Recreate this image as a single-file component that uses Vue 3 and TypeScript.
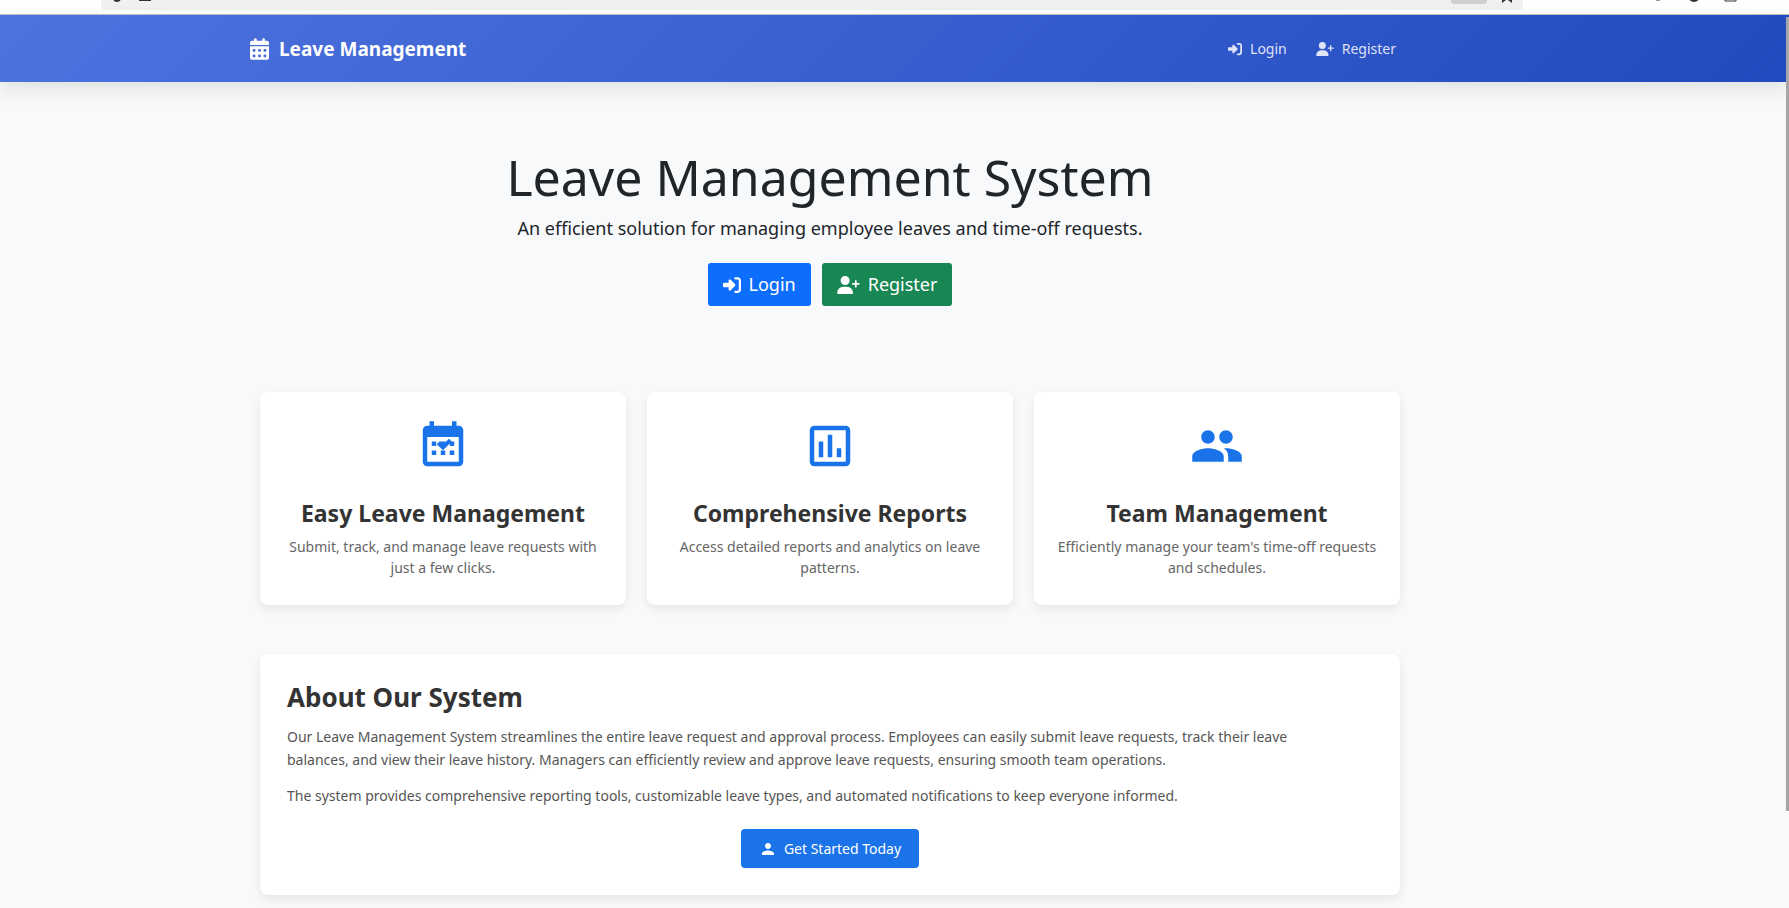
<script setup lang="ts">
interface Feature {
  title: string
  text: string
  icon: string
}

const loginIcon =
  'M217.9 105.9L340.7 228.7c7.2 7.2 11.3 17.1 11.3 27.3s-4.1 20.1-11.3 27.3L217.9 406.1c-6.4 6.4-15 9.9-24 9.9c-18.7 0-33.9-15.2-33.9-33.9V320H32c-17.7 0-32-14.3-32-32V224c0-17.7 14.3-32 32-32H160V129.9c0-18.7 15.2-33.9 33.9-33.9c9 0 17.6 3.6 24 9.9zM352 416h64c17.7 0 32-14.3 32-32V128c0-17.7-14.3-32-32-32H352c-17.7 0-32-14.3-32-32s14.3-32 32-32h64c53 0 96 43 96 96V384c0 53-43 96-96 96H352c-17.7 0-32-14.3-32-32s14.3-32 32-32z'
const registerIcon =
  'M96 128a128 128 0 1 1 256 0A128 128 0 1 1 96 128zM0 482.3C0 383.8 79.8 304 178.3 304h91.4C368.2 304 448 383.8 448 482.3c0 16.4-13.3 29.7-29.7 29.7H29.7C13.3 512 0 498.7 0 482.3zM504 312V248H440c-13.3 0-24-10.7-24-24s10.7-24 24-24h64V136c0-13.3 10.7-24 24-24s24 10.7 24 24v64h64c13.3 0 24 10.7 24 24s-10.7 24-24 24H552v64c0 13.3-10.7 24-24 24s-24-10.7-24-24z'
const calendarIcon =
  'M128 0c17.7 0 32 14.3 32 32V64H288V32c0-17.7 14.3-32 32-32s32 14.3 32 32V64h48c26.500 0 48 21.500 48 48v48H0V112C0 85.500 21.500 64 48 64H96V32c0-17.700 14.300-32 32-32zM0 192H448V464c0 26.500-21.500 48-48 48H48c-26.500 0-48-21.500-48-48V192zm64 80v32c0 8.800 7.200 16 16 16h32c8.800 0 16-7.200 16-16V272c0-8.800-7.200-16-16-16H80c-8.800 0-16 7.200-16 16zm128 0v32c0 8.800 7.200 16 16 16h32c8.800 0 16-7.200 16-16V272c0-8.800-7.200-16-16-16H208c-8.800 0-16 7.200-16 16zm144-16c-8.800 0-16 7.200-16 16v32c0 8.800 7.200 16 16 16h32c8.800 0 16-7.200 16-16V272c0-8.800-7.200-16-16-16H336zM64 400v32c0 8.800 7.200 16 16 16h32c8.800 0 16-7.200 16-16V400c0-8.800-7.200-16-16-16H80c-8.800 0-16 7.200-16 16zm144-16c-8.800 0-16 7.200-16 16v32c0 8.800 7.200 16 16 16h32c8.800 0 16-7.200 16-16V400c0-8.800-7.200-16-16-16H208zm112 16v32c0 8.800 7.200 16 16 16h32c8.800 0 16-7.200 16-16V400c0-8.800-7.200-16-16-16H336c-8.800 0-16 7.200-16 16z'

const features: Feature[] = [
  {
    title: 'Easy Leave Management',
    text: 'Submit, track, and manage leave requests with just a few clicks.',
    icon: 'M19 3h-1V1h-2v2H8V1H6v2H5c-1.110 0-2 .9-2 2v14c0 1.100.89 2 2 2h14c1.100 0 2-.9 2-2V5c0-1.100-.9-2-2-2zm0 16H5V8h14v11zM7 10h2v2H7zM15 10h2v2h-2zM7 14h2v2H7zM11 14h2v2h-2zM15 14h2v2h-2zM9.200 11.200L10.400 10L13.400 10L14.700 8.800L15.900 10L12 13.900z',
  },
  {
    title: 'Comprehensive Reports',
    text: 'Access detailed reports and analytics on leave patterns.',
    icon: 'M9 17H7v-7h2v7zm4 0h-2V7h2v10zm4 0h-2v-4h2v4zm2 2H5V5h14v14zm0-16H5c-1.100 0-2 .9-2 2v14c0 1.100.9 2 2 2h14c1.100 0 2-.9 2-2V5c0-1.100-.9-2-2-2z',
  },
  {
    title: 'Team Management',
    text: "Efficiently manage your team's time-off requests and schedules.",
    icon: 'M16 11c1.660 0 2.990-1.340 2.990-3S17.660 5 16 5c-1.660 0-3 1.340-3 3s1.340 3 3 3zm-8 0c1.660 0 2.990-1.340 2.990-3S9.660 5 8 5C6.340 5 5 6.340 5 8s1.340 3 3 3zm0 2c-2.330 0-7 1.170-7 3.500V19h14v-2.500c0-2.330-4.670-3.500-7-3.500zm8 0c-.29 0-.62.02-.97.05 1.160.84 1.970 1.970 1.970 3.450V19h6v-2.500c0-2.330-4.670-3.500-7-3.500z',
  },
]
</script>

<template>
  <div class="page">
    <div class="chrome">
      <div class="address">
        <svg class="glyph" viewBox="0 0 60 10"><circle cx="16" cy="-2" r="3" /><path d="M38 0h12" /></svg>
        <span class="badge"></span>
        <svg class="star" viewBox="0 0 14 10"><path d="M3-2v3l4-3 4 3v-3" /></svg>
      </div>
      <svg class="tools" viewBox="0 0 90 10"><path class="faint" d="M3 0h4" /><circle cx="41" cy="-4" r="5" /><path class="thin" d="M72-4v5h11v-5" /></svg>
    </div>
    <header class="navbar">
      <div class="navrow">
        <a class="brand" href="#">
          <svg viewBox="0 0 448 512"><path fill-rule="evenodd" :d="calendarIcon" /></svg>
          <span>Leave Management</span>
        </a>
        <nav>
          <a href="#login"><svg class="ic-login" viewBox="0 0 512 512"><path :d="loginIcon" /></svg><span>Login</span></a>
          <a href="#register"><svg class="ic-register" viewBox="0 0 640 512"><path :d="registerIcon" /></svg><span>Register</span></a>
        </nav>
      </div>
    </header>
    <div class="scrollthumb"></div>
    <main>
      <div class="content">
        <section class="hero">
          <h1>Leave Management System</h1>
          <p>An efficient solution for managing employee leaves and time-off requests.</p>
          <div class="actions">
            <a class="btn primary" href="#login"><svg class="ic-login" viewBox="0 0 512 512"><path :d="loginIcon" /></svg><span>Login</span></a>
            <a class="btn success" href="#register"><svg class="ic-register" viewBox="0 0 640 512"><path :d="registerIcon" /></svg><span>Register</span></a>
          </div>
        </section>
        <section class="features">
          <article v-for="f in features" :key="f.title" class="card">
            <svg viewBox="0 0 24 24"><path :d="f.icon" /></svg>
            <h3>{{ f.title }}</h3>
            <p>{{ f.text }}</p>
          </article>
        </section>
        <section class="card about">
          <h2>About Our System</h2>
          <p>Our Leave Management System streamlines the entire leave request and approval process. Employees can easily submit leave requests, track their leave balances, and view their leave history. Managers can efficiently review and approve leave requests, ensuring smooth team operations.</p>
          <p>The system provides comprehensive reporting tools, customizable leave types, and automated notifications to keep everyone informed.</p>
          <div class="start">
            <a href="#register">
              <svg viewBox="0 0 24 24"><path d="M12 12c2.210 0 4-1.790 4-4s-1.790-4-4-4-4 1.790-4 4 1.790 4 4 4zm0 2c-2.670 0-8 1.340-8 4v2h16v-2c0-2.660-5.330-4-8-4z" /></svg>
              <span>Get Started Today</span>
            </a>
          </div>
        </section>
      </div>
    </main>
  </div>
</template>

<style>
body {
  margin: 0;
  background: #f8f9fb;
}
</style>

<style scoped>
.page {
  position: relative;
  height: 100vh;
  overflow: hidden;
  font-family: "Noto Sans", sans-serif;
  color: #212529;
  background: #f8f9fb;
}
a {
  text-decoration: none;
  color: inherit;
}
svg {
  flex: none;
  fill: currentColor;
}
.chrome {
  display: flex;
  align-items: flex-start;
  height: 14px;
  padding-left: 101px;
  background: #fff;
  border-bottom: 1px solid #c3c3c3;
}
.address {
  flex: 1;
  display: flex;
  height: 10px;
  background: #f1f1f1;
  border-radius: 0 0 4px 4px;
}
.chrome svg {
  height: 10px;
  fill: none;
  stroke: #333;
  stroke-width: 2;
  overflow: hidden;
}
.chrome .glyph {
  width: 60px;
}
.badge {
  width: 36px;
  height: 4px;
  margin-left: auto;
  background: #cfcfcf;
  border-radius: 0 0 3px 3px;
}
.chrome .star {
  width: 14px;
  margin: 0 9px 0 13px;
}
.chrome .tools {
  width: 90px;
  margin: 0 46px 0 130px;
}
.chrome .faint {
  stroke: #999;
}
.chrome .thin {
  stroke-width: 1;
}
.navbar {
  position: relative;
  background: linear-gradient(135deg, #4e73df 0%, #224abe 100%);
  box-shadow: 0 7px 20px rgba(0, 0, 0, 0.1);
  color: #fff;
}
.navrow,
main {
  display: grid;
  grid-template-columns: 260fr 1140fr 389fr;
}
.navrow {
  grid-template-columns: 250fr 1146fr 393fr;
}
.navrow::before,
main::before {
  content: "";
}
.navrow {
  height: 67px;
}
.brand {
  grid-column: 2;
  grid-row: 1;
  justify-self: start;
  display: flex;
  align-items: center;
  gap: 10px;
  font-size: 19px;
  font-weight: 700;
}
.brand svg {
  width: 19px;
  height: 22px;
}
nav {
  grid-column: 2;
  grid-row: 1;
  justify-self: end;
  display: flex;
  gap: 29px;
  font-size: 14px;
  color: rgba(255, 255, 255, 0.85);
}
nav a {
  display: flex;
  align-items: center;
  gap: 8px;
}
nav .ic-login {
  width: 14px;
  height: 14px;
}
nav .ic-register {
  width: 18px;
  height: 14px;
}
.scrollthumb {
  position: absolute;
  z-index: 2;
  right: 0;
  top: 17px;
  bottom: 97px;
  width: 3px;
  background: #a5a6a7;
}
.content {
  grid-column: 2;
}
.hero {
  padding: 64px 0 86px;
  text-align: center;
}
h1 {
  margin: 0 0 7px;
  font-size: 50px;
  line-height: 62px;
  font-weight: 400;
}
.hero p {
  margin: 0 0 21px;
  font-size: 18px;
  line-height: 27px;
}
.actions {
  display: flex;
  justify-content: center;
  gap: 11px;
}
.btn {
  display: flex;
  align-items: center;
  gap: 8px;
  padding: 8px 15px;
  font-size: 18px;
  line-height: 27px;
  color: #fff;
  border-radius: 3px;
}
.primary {
  background: #0d6efd;
}
.success {
  background: #198754;
}
.btn .ic-login {
  width: 18px;
  height: 18px;
}
.btn .ic-register {
  width: 23px;
  height: 18px;
}
.features {
  display: grid;
  grid-template-columns: repeat(3, 1fr);
  gap: 21px;
  margin-bottom: 49px;
}
.card {
  background: #fff;
  border-radius: 8px;
  box-shadow: 0 4px 10px rgba(0, 0, 0, 0.08);
}
.features .card {
  padding: 27px 18px;
  text-align: center;
}
.features svg {
  display: block;
  width: 54px;
  height: 54px;
  margin: 0 auto 24px;
  color: #1a73e8;
}
h3 {
  margin: 0 0 7px;
  font-size: 23px;
  line-height: 32px;
  font-weight: 700;
  color: #333;
}
.features p {
  margin: 0;
  font-size: 14px;
  line-height: 21px;
  color: #666;
}
.about {
  padding: 27px;
}
h2 {
  margin: 0 0 12px;
  font-size: 26px;
  line-height: 32px;
  font-weight: 700;
  color: #333;
}
.about p {
  margin: 0 0 13px;
  padding-right: 40px;
  font-size: 14px;
  line-height: 23px;
  color: #555;
}
.start {
  display: flex;
  justify-content: center;
  padding-top: 9px;
}
.start a {
  display: flex;
  align-items: center;
  gap: 7px;
  padding: 9px 18px;
  font-size: 14px;
  line-height: 21px;
  color: #fff;
  background: #1a73e8;
  border-radius: 4px;
}
.start svg {
  width: 18px;
  height: 18px;
}
</style>
